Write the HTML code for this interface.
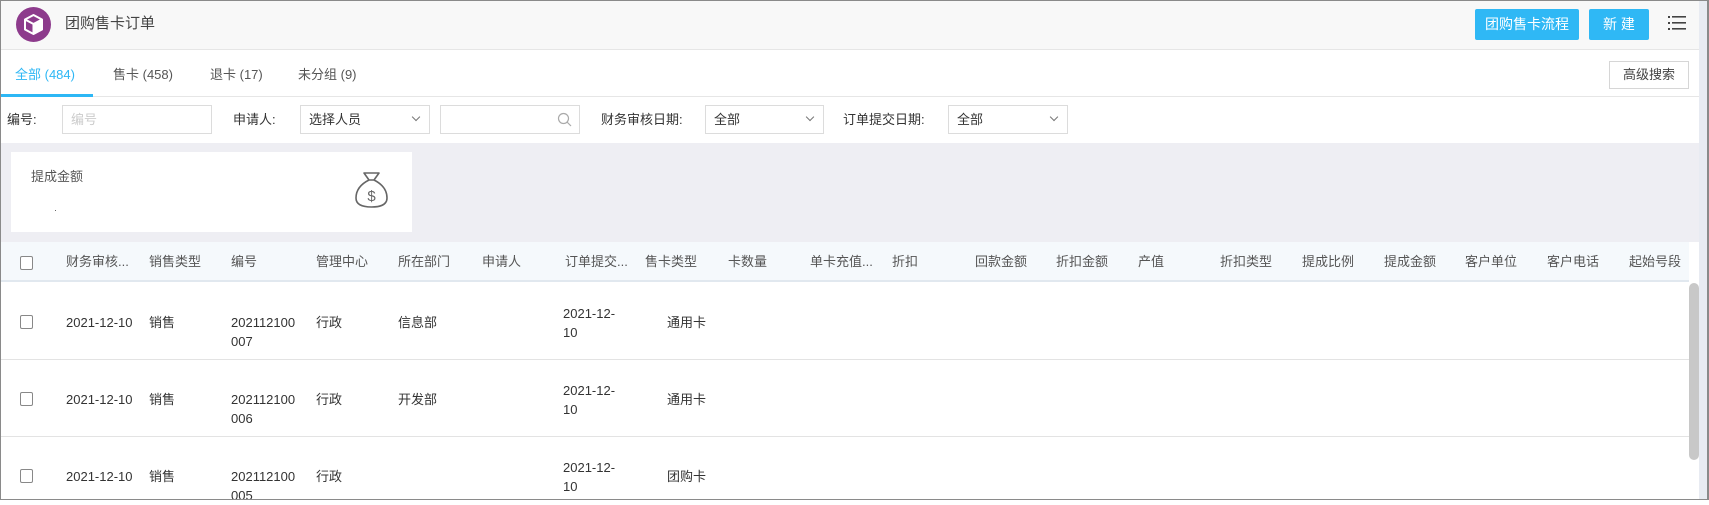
<!DOCTYPE html>
<html><head><meta charset="utf-8"><style>
*{margin:0;padding:0;box-sizing:border-box}
body{width:1709px;height:500px;overflow:hidden;background:#fff;font-family:"Liberation Sans","Noto Sans CJK SC",sans-serif;font-size:13px;line-height:19px;color:#333;position:relative}
.a{position:absolute;white-space:nowrap;line-height:19px}
.frame{position:absolute;left:0;top:0;width:1709px;height:500px;border:1px solid #8a8a8a;border-right:2px solid #8a8a8a;pointer-events:none}
.hd{position:absolute;left:0;top:0;width:1699px;height:50px;background:#f8f8f8;border-bottom:1px solid #e6e6e6}
.btn{position:absolute;background:#2fb8f5;color:#fff;border-radius:2px;text-align:center;line-height:31px;font-size:14px}
.inp{position:absolute;border:1px solid #dcdcdc;background:#fff;height:29px;top:105px;font-size:13px;line-height:27px;padding-left:8px}
.chev{position:absolute;right:10px;top:8px;width:6px;height:6px;border-right:1px solid #777;border-bottom:1px solid #777;transform:rotate(45deg)}
.cb{position:absolute;width:13px;height:14px;border:1px solid #888;border-radius:2px;background:#fff}
.th{position:absolute;top:252px;color:#555;font-size:13px;line-height:19px;white-space:nowrap}
.sep{position:absolute;left:0;width:1689px;height:1px;background:#e3e3e3}
</style></head><body>
<div class="hd"></div>
<svg class="a" style="left:16px;top:7px" width="35" height="35" viewBox="0 0 35 35"><circle cx="17.5" cy="17.5" r="17.5" fill="#8d3b8c"/><path d="M17.5 8 L26 12.5 L26 22.5 L17.5 27 L9 22.5 L9 12.5 Z M9 12.5 L17.5 17 L26 12.5 M17.5 17 V27" fill="none" stroke="#fff" stroke-width="2" stroke-linejoin="round"/><path d="M17.5 17 L26 12.5 L26 22.5 L17.5 27Z" fill="#fff"/></svg>
<div class="a" style="left:65px;top:14px;font-size:15px;color:#444">团购售卡订单</div>
<div class="btn" style="left:1475px;top:9px;width:104px">团购售卡流程</div>
<div class="btn" style="left:1589px;top:9px;width:60px">新 建</div>
<svg class="a" style="left:1668px;top:15px" width="18" height="16"><g fill="#444"><rect x="0" y="1" width="2" height="2"/><rect x="4" y="1" width="14" height="1.6"/><rect x="0" y="7" width="2" height="2"/><rect x="4" y="7" width="14" height="1.6"/><rect x="0" y="13" width="2" height="2"/><rect x="4" y="13" width="14" height="1.6"/></g></svg>
<div class="a" style="left:1699px;top:0;width:9px;height:500px;background:#e8ebf2"></div>
<div class="a" style="left:15px;top:65px;color:#2db7f5;font-size:13px">全部 (484)</div>
<div class="a" style="left:113px;top:65px;color:#555">售卡 (458)</div>
<div class="a" style="left:210px;top:65px;color:#555">退卡 (17)</div>
<div class="a" style="left:298px;top:65px;color:#555">未分组 (9)</div>
<div class="a" style="left:0;top:96px;width:1699px;height:1px;background:#e6e6e6"></div>
<div class="a" style="left:0;top:94px;width:93px;height:3px;background:#2db7f5"></div>
<div class="a" style="left:1609px;top:61px;width:80px;height:28px;border:1px solid #d6d6d6;text-align:center;line-height:26px;color:#444">高级搜索</div>
<div class="a" style="left:7px;top:110px">编号:</div>
<div class="inp" style="left:62px;width:150px;color:#ccc">编号</div>
<div class="a" style="left:233px;top:110px">申请人:</div>
<div class="inp" style="left:300px;width:130px">选择人员<span class="chev"></span></div>
<div class="inp" style="left:440px;width:140px"><svg class="a" style="right:6px;top:6px" width="16" height="16"><circle cx="6.5" cy="6.5" r="5" fill="none" stroke="#aaa" stroke-width="1.2"/><path d="M10 10 L14 14" stroke="#aaa" stroke-width="1.2"/></svg></div>
<div class="a" style="left:601px;top:110px">财务审核日期:</div>
<div class="inp" style="left:705px;width:119px">全部<span class="chev"></span></div>
<div class="a" style="left:843px;top:110px">订单提交日期:</div>
<div class="inp" style="left:948px;width:120px">全部<span class="chev"></span></div>
<div class="a" style="left:0;top:143px;width:1699px;height:99px;background:#eeeef3"></div>
<div class="a" style="left:11px;top:152px;width:401px;height:80px;background:#fff"></div>
<div class="a" style="left:31px;top:167px;color:#555">提成金额</div>
<div class="a" style="left:55px;top:210px;width:1px;height:1px;background:#666"></div>
<svg class="a" style="left:355px;top:172px" width="33" height="36" viewBox="0 0 33 36"><path d="M9 1 H24 L19 8 H14 Z" fill="none" stroke="#666" stroke-width="1.6" stroke-linejoin="round"/><path d="M14 8 C4 13 1 20 1 26 C1 32 6 35 16.5 35 C27 35 32 32 32 26 C32 20 29 13 19 8" fill="none" stroke="#666" stroke-width="1.6"/><text x="16.5" y="29" text-anchor="middle" font-size="15" fill="#666" font-family="Liberation Sans">$</text></svg>
<div class="a" style="left:0;top:242px;width:1689px;height:40px;background:#f5f9fc;border-bottom:2px solid #e1e8ef"></div>
<div class="cb" style="left:20px;top:256px"></div>
<div class="th" style="left:66px">财务审核...</div>
<div class="th" style="left:149px">销售类型</div>
<div class="th" style="left:231px">编号</div>
<div class="th" style="left:316px">管理中心</div>
<div class="th" style="left:398px">所在部门</div>
<div class="th" style="left:482px">申请人</div>
<div class="th" style="left:565px">订单提交...</div>
<div class="th" style="left:645px">售卡类型</div>
<div class="th" style="left:728px">卡数量</div>
<div class="th" style="left:810px">单卡充值...</div>
<div class="th" style="left:892px">折扣</div>
<div class="th" style="left:975px">回款金额</div>
<div class="th" style="left:1056px">折扣金额</div>
<div class="th" style="left:1138px">产值</div>
<div class="th" style="left:1220px">折扣类型</div>
<div class="th" style="left:1302px">提成比例</div>
<div class="th" style="left:1384px">提成金额</div>
<div class="th" style="left:1465px">客户单位</div>
<div class="th" style="left:1547px">客户电话</div>
<div class="th" style="left:1629px">起始号段</div>

<div class="cb" style="left:20px;top:315px"></div>
<div class="a" style="left:66px;top:313px">2021-12-10</div>
<div class="a" style="left:149px;top:313px">销售</div>
<div class="a" style="left:231px;top:313px">202112100<br>007</div>
<div class="a" style="left:316px;top:313px">行政</div>
<div class="a" style="left:398px;top:313px">信息部</div>
<div class="a" style="left:563px;top:304px">2021-12-<br>10</div>
<div class="a" style="left:667px;top:313px">通用卡</div>
<div class="sep" style="top:359px"></div>

<div class="cb" style="left:20px;top:392px"></div>
<div class="a" style="left:66px;top:390px">2021-12-10</div>
<div class="a" style="left:149px;top:390px">销售</div>
<div class="a" style="left:231px;top:390px">202112100<br>006</div>
<div class="a" style="left:316px;top:390px">行政</div>
<div class="a" style="left:398px;top:390px">开发部</div>
<div class="a" style="left:563px;top:381px">2021-12-<br>10</div>
<div class="a" style="left:667px;top:390px">通用卡</div>
<div class="sep" style="top:436px"></div>

<div class="cb" style="left:20px;top:469px"></div>
<div class="a" style="left:66px;top:467px">2021-12-10</div>
<div class="a" style="left:149px;top:467px">销售</div>
<div class="a" style="left:231px;top:467px">202112100<br>005</div>
<div class="a" style="left:316px;top:467px">行政</div>
<div class="a" style="left:563px;top:458px">2021-12-<br>10</div>
<div class="a" style="left:667px;top:467px">团购卡</div>

<div class="a" style="left:1689px;top:283px;width:10px;height:177px;background:#c8c8c8;border-radius:5px"></div>
<div class="frame"></div>
</body></html>
